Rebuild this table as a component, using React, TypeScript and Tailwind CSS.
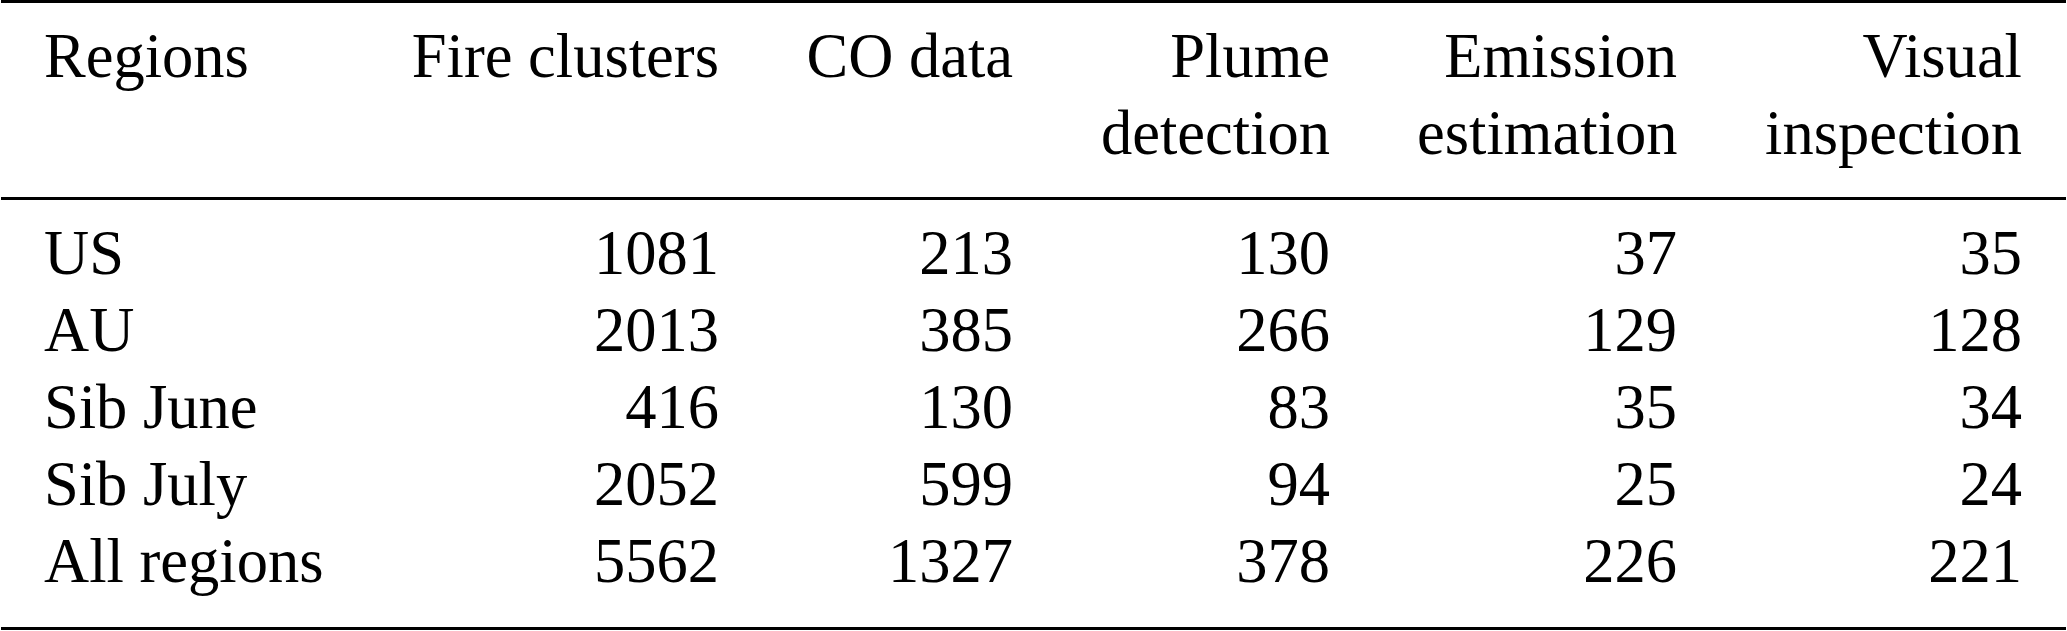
import React from "react";

const header: { text: React.ReactNode; align: "left" | "right" }[] = [
  { text: "Regions", align: "left" },
  { text: "Fire clusters", align: "right" },
  { text: "CO data", align: "right" },
  { text: (<>Plume<br />detection</>), align: "right" },
  { text: (<>Emission<br />estimation</>), align: "right" },
  { text: (<>Visual<br />inspection</>), align: "right" },
];

const rows: string[][] = [
  ["US", "1081", "213", "130", "37", "35"],
  ["AU", "2013", "385", "266", "129", "128"],
  ["Sib June", "416", "130", "83", "35", "34"],
  ["Sib July", "2052", "599", "94", "25", "24"],
  ["All regions", "5562", "1327", "378", "226", "221"],
];

const gridCls =
  "grid grid-cols-[278px_310px_207px_230px_260px_258px] gap-x-[87px] px-[44px]";

export default function App() {
  return (
    <div className="w-[2067px] h-[631px] bg-white text-black font-['Liberation_Serif','Times_New_Roman',serif] text-[62.5px] leading-[77px] overflow-hidden">
      <div className="mx-px h-[3px] bg-black" />
      <div className={`${gridCls} pt-[15px] pb-[25px]`}>
        {header.map((h, i) => (
          <div
            key={i}
            className={`whitespace-nowrap ${h.align === "left" ? "text-left" : "text-right"}`}
          >
            {h.text}
          </div>
        ))}
      </div>
      <div className="mx-px h-[3px] bg-black" />
      <div className={`${gridCls} pt-[15px] pb-[27px]`}>
        {rows.map((r, ri) =>
          r.map((c, ci) => (
            <div
              key={`${ri}-${ci}`}
              className={`whitespace-nowrap ${ci === 0 ? "text-left" : "text-right"}`}
            >
              {c}
            </div>
          ))
        )}
      </div>
      <div className="mx-px h-[3px] bg-black" />
    </div>
  );
}
